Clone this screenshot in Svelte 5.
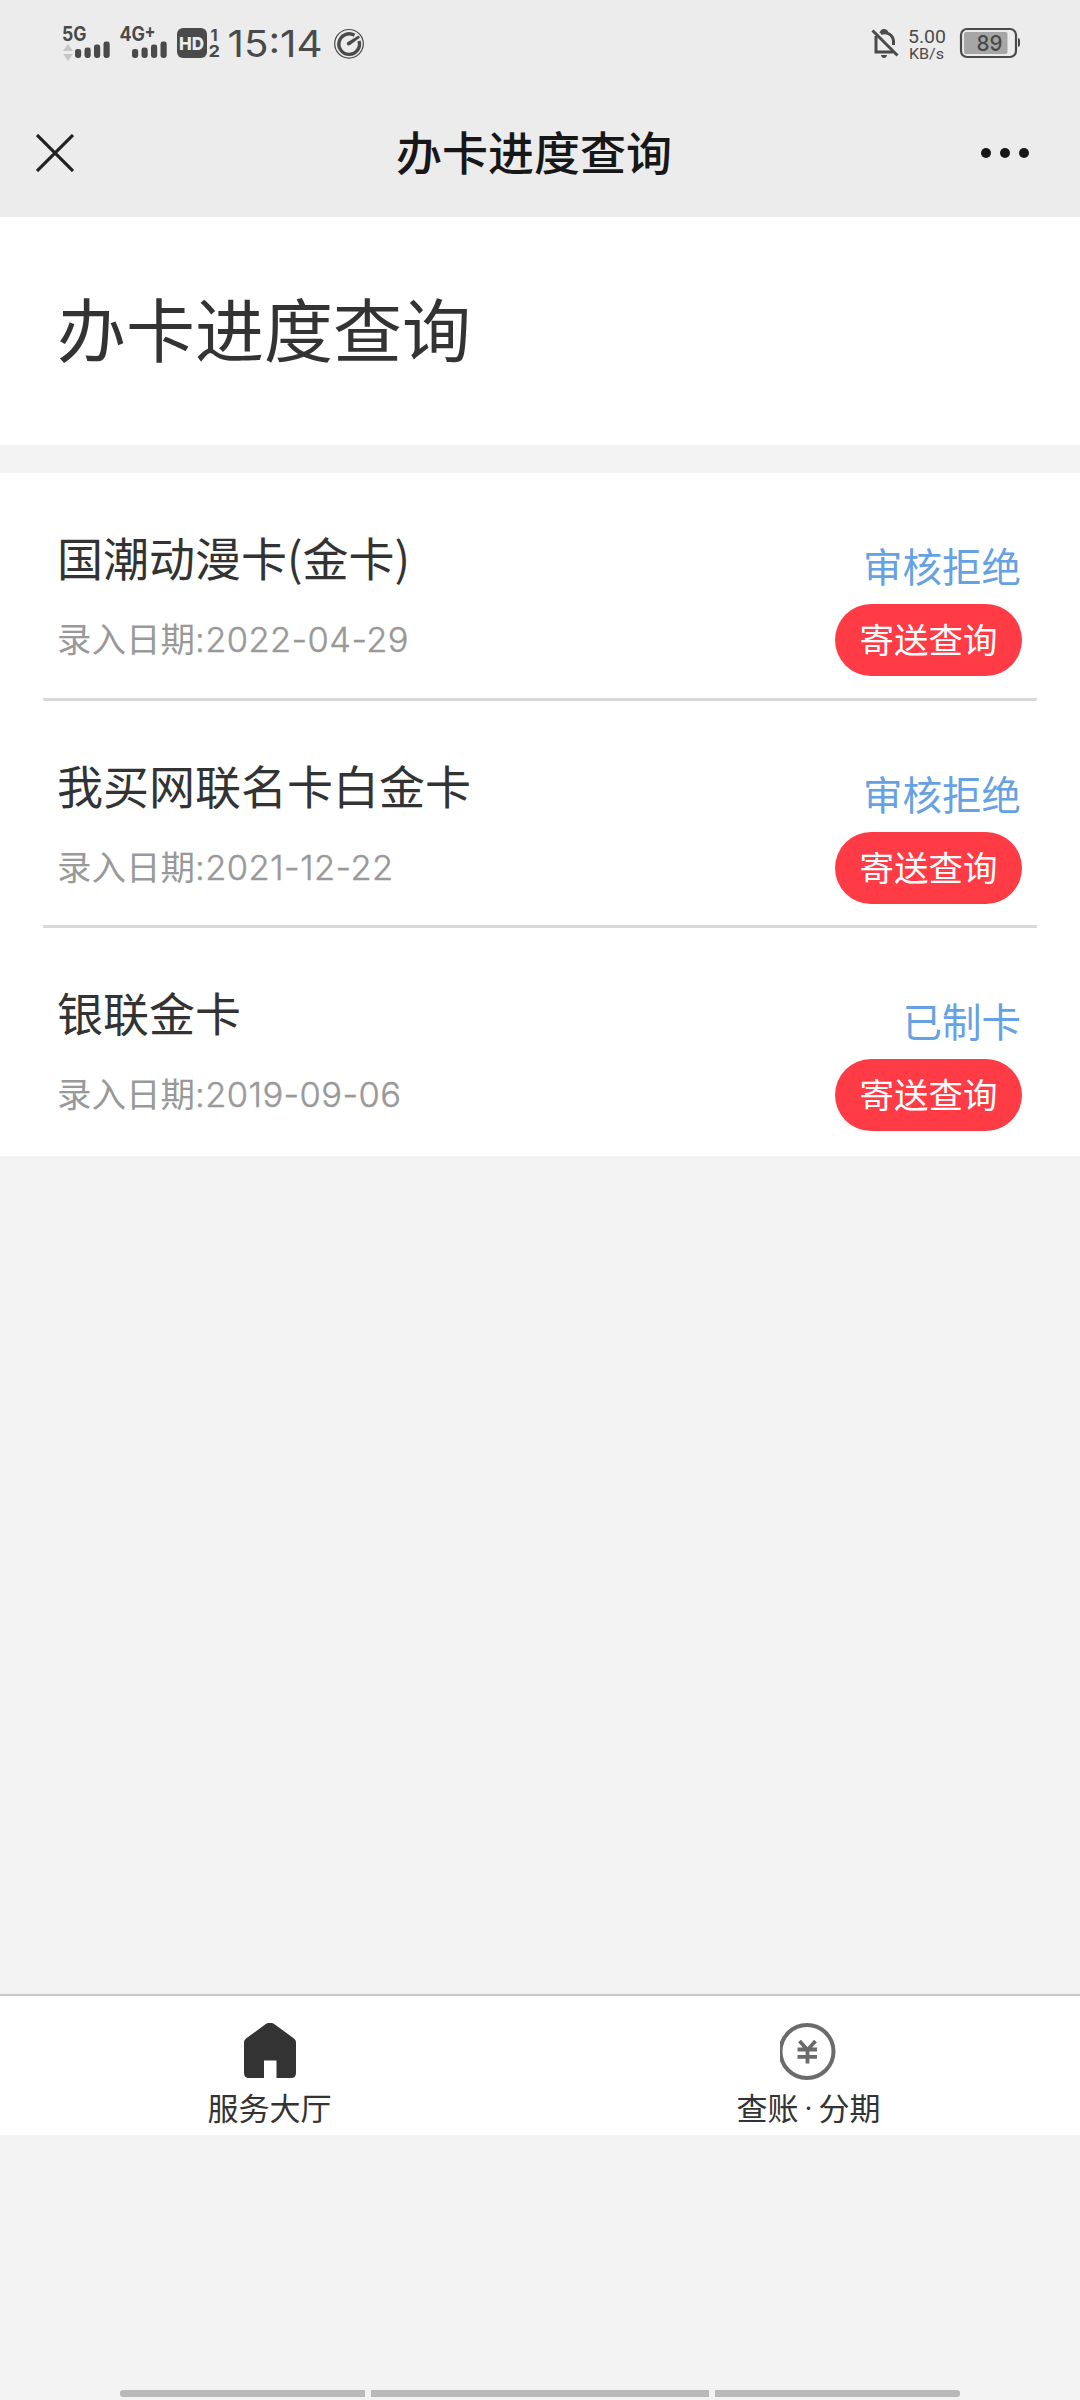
<script>
  const title = '办卡进度查询'

  let cards = [
    { name: '国潮动漫卡(金卡)', date: '2022-04-29', status: '审核拒绝' },
    { name: '我买网联名卡白金卡', date: '2021-12-22', status: '审核拒绝' },
    { name: '银联金卡', date: '2019-09-06', status: '已制卡' }
  ]

  // x, top of each signal bar
  const bars = [[0, 49], [9.5, 47.5], [19, 44.5], [28.5, 41.5]]
</script>

<div class="screen">
  <div class="statusbar">
    <svg class="signals" width="330" height="70" viewBox="50 0 330 70" fill="#4a4a4a">
      <text class="net" x="62" y="41" textLength="24.5" lengthAdjust="spacingAndGlyphs">5G</text>
      <path d="M68 44l5 7h-10zM68 61l5-7h-10z" fill="#c6c6c6" />
      <text class="net" x="119.5" y="41" textLength="25.5" lengthAdjust="spacingAndGlyphs">4G</text>
      <text class="net" x="144.5" y="37.5" textLength="11" lengthAdjust="spacingAndGlyphs">+</text>
      {#each [75, 132] as left}
        {#each bars as [x, top]}
          <rect x={left + x} y={top} width="6.2" height={58 - top} rx="2.4" />
        {/each}
      {/each}
      <rect x="177" y="28" width="30" height="30" rx="6" />
      <text class="hd" x="179" y="50" textLength="25" lengthAdjust="spacingAndGlyphs">HD</text>
      <text class="sim" x="210.5" y="40.5">1</text>
      <text class="sim" x="208.5" y="57" textLength="11.5" lengthAdjust="spacingAndGlyphs">2</text>
      <text class="clock" x="227.5" y="56.5" textLength="95" lengthAdjust="spacingAndGlyphs">15:14</text>
      <g fill="none" stroke="#4a4a4a">
        <circle cx="349" cy="43.8" r="14.3" stroke-width="1.2" />
        <path d="M354.5 35.3A10.3 10.3 0 1 0 359 41" stroke-width="3.4" />
      </g>
      <path d="M347 42.5L358.5 35.5l1.5 2L350 45a2 2 0 0 1-3-2.5z" />
    </svg>

    <svg width="160" height="70" viewBox="865 0 160 70" fill="#4a4a4a">
      <g fill="none" stroke="#4a4a4a" stroke-width="3">
        <path d="M876 36V52H893M881 33.5A9 9 0 0 1 893.5 41V45" />
        <path d="M872.5 30.5L897.5 55.5" />
      </g>
      <path d="M879.5 33q1-4 4.500-4t4.500 3.500l-5 1.500zM881 55h6q-.5 3-3 3t-3-3z" />
      <text class="speed" x="908" y="42.5" textLength="38" lengthAdjust="spacingAndGlyphs">5.00</text>
      <text class="unit" x="909" y="59" textLength="35" lengthAdjust="spacingAndGlyphs">KB/s</text>
      <rect x="961" y="29" width="55" height="28" rx="6" fill="none" stroke="#4a4a4a" stroke-width="2.2" />
      <rect x="964" y="32" width="43.5" height="22" rx="2" fill="#a6a6a6" />
      <path d="M1018 38q2 .5 2 2v5q0 1.500-2 2z" />
      <text class="level" x="976.5" y="50.8" textLength="26" lengthAdjust="spacingAndGlyphs">89</text>
    </svg>
  </div>

  <header>
    <button aria-label="关闭">
      <svg width="38" height="38" viewBox="0 0 38 38">
        <path d="M1 1l36 36M37 1L1 37" stroke="#222" stroke-width="3.2" />
      </svg>
    </button>
    <span class="header-title">{title}</span>
    <button aria-label="更多">
      <svg width="50" height="12" viewBox="0 0 50 12" fill="#171717">
        <circle cx="6" cy="6" r="5" />
        <circle cx="25" cy="6" r="5" />
        <circle cx="44" cy="6" r="5" />
      </svg>
    </button>
  </header>

  <main>
    <h1>{title}</h1>

    <ul>
      {#each cards as card}
        <li>
          <div class="info">
            <span class="name">{card.name}</span>
            <span class="date">录入日期<span class="num">:{card.date}</span></span>
          </div>
          <div class="side">
            <span class="status">{card.status}</span>
            <button class="query">寄送查询</button>
          </div>
        </li>
      {/each}
    </ul>
  </main>

  <nav>
    <a href="#hall">
      <svg width="54" height="57" viewBox="0 0 54 57">
        <path
          d="M23.5.5Q27-.8 30.500.5L51 15.500q2 1.500 2 4V50q0 5-5 5H33.500V37.500H21V55H6q-5 0-5-5V19.500q0-2.500 2-4z"
          fill="#333"
        />
      </svg>
      <span>服务大厅</span>
    </a>
    <a href="#bill">
      <svg width="58" height="57" viewBox="0 0 58 57" fill="none" stroke="#6b6b6b">
        <circle cx="27" cy="28.5" r="26.500" stroke-width="4" />
        <path d="M19.5 18l8 9 8-9M27.500 26V40.500M17.500 26.500H37M17.500 33.800H37" stroke-width="3.8" />
      </svg>
      <span>查账<i>·</i>分期</span>
    </a>
  </nav>

  <div class="gesture">
    <span></span>
    <span class="mid"></span>
    <span></span>
  </div>
</div>

<style>
  :global(body) {
    background: #f3f3f3;
  }

  .screen {
    display: flex;
    flex-direction: column;
    width: 1080px;
    height: 2400px;
    overflow: hidden;
    background: #f3f3f3;
    color: #333;
    font-family: "Noto Sans CJK SC", sans-serif;
  }

  svg {
    display: block;
  }

  button {
    border: 0;
    padding: 0;
    background: none;
    font: inherit;
  }

  .statusbar {
    display: flex;
    justify-content: space-between;
    height: 87px;
    padding: 0 55px 0 50px;
    background: #ececec;
  }

  .statusbar text {
    font-family: Inter, sans-serif;
  }

  .statusbar .net {
    font-size: 19.5px;
    font-weight: 700;
  }

  .statusbar .hd {
    font-size: 18px;
    font-weight: 800;
    fill: #ececec;
  }

  .statusbar .sim {
    font-size: 16.5px;
    font-weight: 700;
  }

  .statusbar .clock {
    font-size: 37px;
    font-weight: 400;
  }

  .statusbar .speed,
  .statusbar .unit {
    font-family: Roboto, sans-serif;
    font-size: 19px;
    font-weight: 400;
  }

  .statusbar .unit {
    font-size: 15.5px;
  }

  .statusbar .level {
    font-size: 22px;
    font-weight: 500;
  }

  header {
    display: flex;
    align-items: center;
    justify-content: space-between;
    height: 130px;
    box-sizing: border-box;
    padding: 0 50px 0 36px;
    background: #ececec;
  }

  header button {
    margin-top: 1px;
  }

  .header-title {
    margin: -4px 0 0 14px;
    font-size: 46px;
    font-weight: 500;
    line-height: 60px;
    color: #171717;
  }

  h1 {
    height: 228px;
    margin: 0 0 28px;
    padding: 60px 57px 0;
    box-sizing: border-box;
    background: #fff;
    font-size: 69px;
    font-weight: 400;
    line-height: 100px;
  }

  ul {
    margin: 0;
    padding: 0 43px;
    list-style: none;
    background: #fff;
  }

  li {
    display: flex;
    justify-content: space-between;
    height: 228px;
    padding: 0 15px 0 14px;
    box-sizing: border-box;
    border-bottom: 3px solid #d9d9d9;
  }

  li:nth-child(2) {
    height: 227px;
  }

  li:last-child {
    border-bottom: 0;
  }

  .info,
  .side {
    display: flex;
    flex-direction: column;
  }

  .info {
    padding-top: 53px;
  }

  .name {
    font-size: 46px;
    line-height: 60px;
  }

  .date {
    margin-top: 26px;
    font-size: 34.5px;
    line-height: 50px;
    color: #999;
  }

  .num {
    font-family: Inter, sans-serif;
    font-weight: 300;
    letter-spacing: 0.4px;
    -webkit-text-stroke: 0.4px #999;
  }

  .side {
    align-items: flex-end;
    padding-top: 66px;
  }

  .status {
    height: 65px;
    padding-right: 1px;
    font-size: 39.5px;
    line-height: 52px;
    color: #66a1e4;
  }

  .query {
    width: 187px;
    height: 72px;
    padding-bottom: 4px;
    border-radius: 36px;
    background: #ff3b45;
    color: #fff;
    font-size: 34.5px;
    line-height: 68px;
  }

  nav {
    display: flex;
    height: 141px;
    margin-top: 838px;
    box-sizing: border-box;
    border-top: 2px solid #c8c8c8;
    background: #fff;
  }

  nav a {
    flex: 1;
    display: flex;
    flex-direction: column;
    align-items: center;
    gap: 5px;
    padding-top: 27px;
    color: #333;
    font-size: 31px;
    line-height: 44px;
    text-decoration: none;
  }

  nav a:last-child {
    padding-right: 2px;
  }

  nav i {
    display: inline-block;
    width: 20px;
    font-style: normal;
    font-family: Roboto, sans-serif;
    text-align: center;
  }

  .gesture {
    display: flex;
    gap: 6px;
    width: 840px;
    height: 7px;
    margin: auto auto 3px;
  }

  .gesture span {
    width: 245px;
    border-radius: 3px 0 0 3px;
    background: #b9b9b9;
  }

  .gesture .mid {
    width: 338px;
    border-radius: 0;
  }

  .gesture span:last-child {
    border-radius: 0 3px 3px 0;
  }
</style>
